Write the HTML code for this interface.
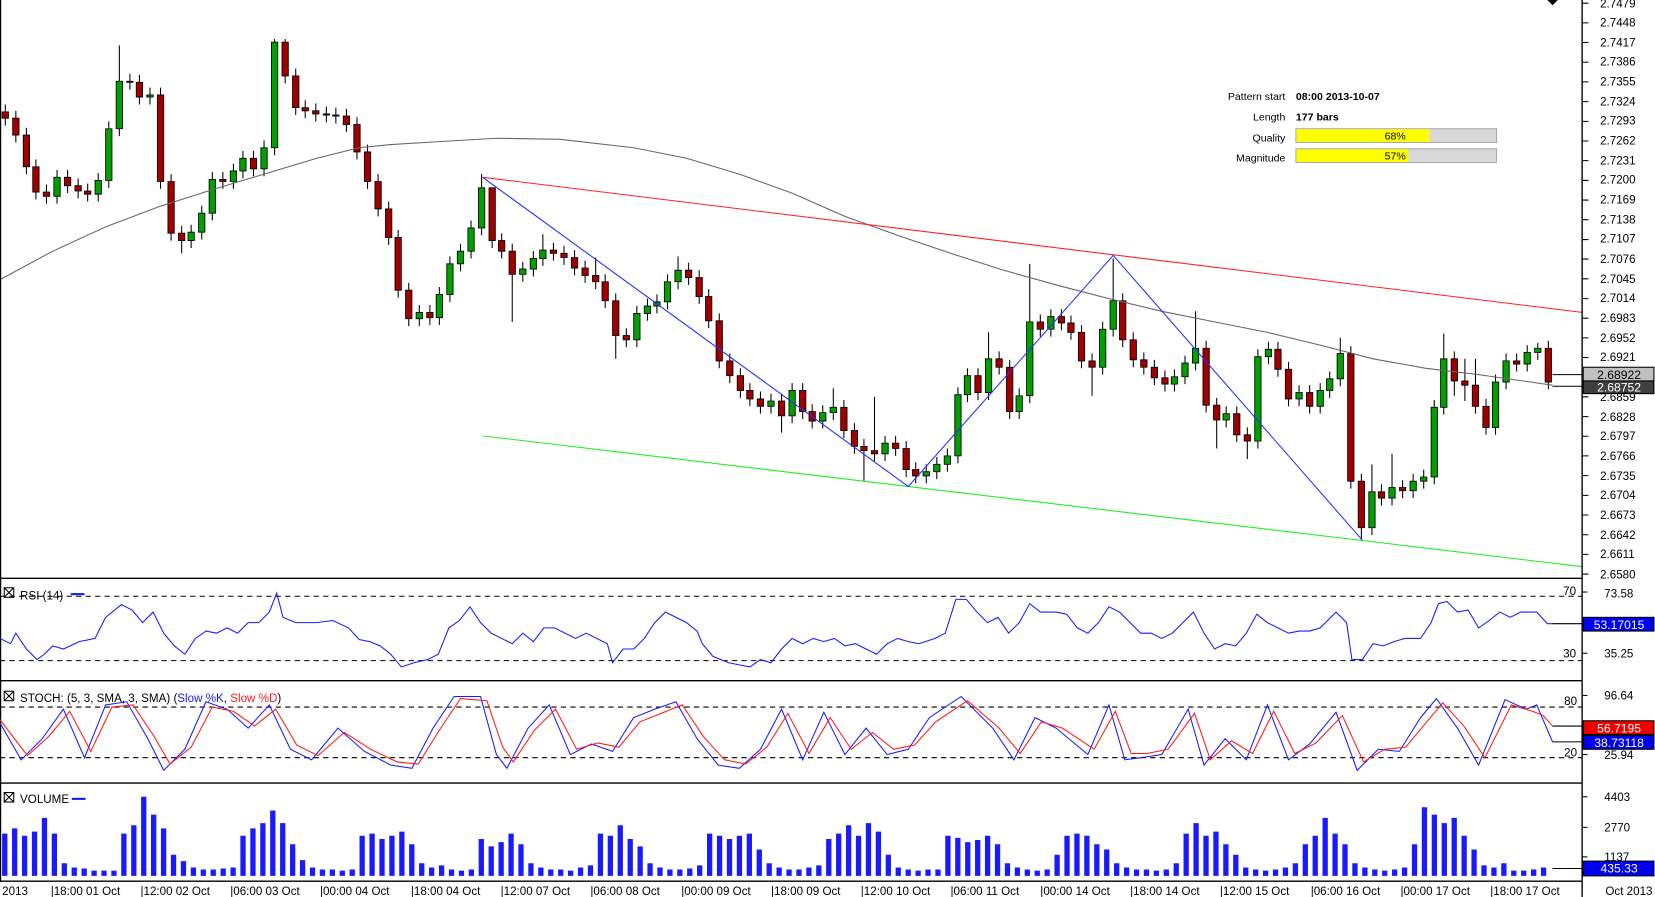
<!DOCTYPE html>
<html><head><meta charset="utf-8"><style>
html,body{margin:0;padding:0;background:#fff;width:1655px;height:897px;overflow:hidden}
svg{display:block;font-family:"Liberation Sans",Arial,sans-serif}
</style></head><body>
<svg width="1655" height="897" viewBox="0 0 1567 850" preserveAspectRatio="none" xmlns="http://www.w3.org/2000/svg">
<rect width="1567" height="850" fill="#fff"/>
<!-- wicks -->
<path fill="none" stroke="#000" stroke-width="1" d="M5,99V119M15,105V135M25,121V165M34,151V189M44,175V193M54,161V193M64,161V183M74,169V188M83,174V191M93,164V191M103,115V178M113,43V129M123,70V85M132,71V99M142,83V99M152,83V179M162,165V228M172,214V240M181,213V235M191,195V227M201,163V209M211,163V179M221,155V179M230,143V169M240,143V167M250,133V167M260,37V147M270,37V79M280,65V109M289,95V112M299,98V115M309,101V116M318,102V117M328,103V125M338,111V151M348,137V179M358,165V205M368,191V232M377,218V282M387,268V309M397,289V309M407,289V308M416,272V308M426,243V286M436,231V257M446,209V245M456,165V223M466,178V235M475,221V245M485,231V305M495,248V267M505,238V262M514,222V252M524,230V247M534,233V251M544,237V261M554,247V268M564,244V274M573,260V292M583,278V340M593,311V329M603,290V329M613,283V304M622,279V297M632,260V293M642,243V274M652,249V270M662,256V288M671,274V311M681,297V349M691,335V363M701,349V377M710,363V385M720,371V392M730,373V392M740,373V410M750,363V401M760,363V397M769,383V406M779,384V406M789,368V398M799,379V415M809,401V430M818,416V456M828,376V437M838,413V437M848,413V432M858,418V452M867,438V458M877,440V458M887,433V454M897,425V447M907,367V439M916,349V381M926,349V379M936,315V379M946,333V355M956,341V397M965,368V397M975,250V382M985,298V319M995,293V319M1005,293V313M1014,299V322M1024,308V349M1034,335V375M1044,305V355M1054,245V319M1063,278V329M1073,315V348M1083,334V355M1093,341V365M1103,351V371M1112,350V371M1122,337V364M1132,295V351M1142,323V391M1152,377V425M1161,385V405M1171,385V419M1181,405V435M1191,331V425M1201,324V345M1210,324V357M1220,343V385M1230,365V385M1240,365V392M1250,363V392M1259,352V377M1269,320V366M1279,328V463M1289,449V512M1299,440V507M1308,459V479M1318,430V479M1328,455V472M1338,449V472M1348,445V463M1358,379V459M1367,316V393M1377,333V375M1387,340V380M1397,340V392M1407,378V412M1416,355V412M1426,335V369M1436,335V352M1446,327V352M1456,325V341M1466,323V369"/>
<!-- green bodies -->
<path fill="#00a000" stroke="#000" stroke-width="0.8" d="M51,168h6V186h-6zM90,171h6V184h-6zM100,122h6V171h-6zM110,77h6V122h-6zM139,90h6V92h-6zM178,220h6V228h-6zM188,202h6V220h-6zM198,170h6V202h-6zM218,162h6V172h-6zM227,150h6V162h-6zM247,140h6V160h-6zM257,40h6V140h-6zM394,296h6V302h-6zM413,279h6V301h-6zM423,250h6V279h-6zM433,238h6V250h-6zM443,216h6V238h-6zM453,178h6V216h-6zM492,255h6V260h-6zM502,245h6V255h-6zM511,237h6V245h-6zM600,297h6V322h-6zM610,290h6V297h-6zM619,286h6V290h-6zM629,267h6V286h-6zM639,256h6V267h-6zM727,380h6V385h-6zM747,370h6V394h-6zM776,391h6V399h-6zM786,386h6V391h-6zM835,420h6V430h-6zM874,447h6V451h-6zM884,440h6V447h-6zM894,432h6V440h-6zM904,374h6V432h-6zM913,356h6V374h-6zM933,340h6V372h-6zM962,375h6V390h-6zM972,305h6V375h-6zM992,300h6V312h-6zM1041,312h6V348h-6zM1051,285h6V312h-6zM1109,357h6V364h-6zM1119,344h6V357h-6zM1129,330h6V344h-6zM1158,392h6V398h-6zM1188,338h6V418h-6zM1198,331h6V338h-6zM1227,372h6V378h-6zM1247,370h6V385h-6zM1256,359h6V370h-6zM1266,335h6V359h-6zM1296,466h6V500h-6zM1315,462h6V472h-6zM1335,456h6V465h-6zM1345,452h6V456h-6zM1355,386h6V452h-6zM1364,340h6V386h-6zM1413,362h6V405h-6zM1423,342h6V362h-6zM1443,334h6V345h-6zM1453,330h6V334h-6z"/>
<!-- red bodies -->
<path fill="#a00000" stroke="#000" stroke-width="0.8" d="M2,106h6V112h-6zM12,112h6V128h-6zM22,128h6V158h-6zM31,158h6V182h-6zM41,182h6V186h-6zM61,168h6V176h-6zM71,176h6V181h-6zM80,181h6V184h-6zM120,77h6V78h-6zM129,78h6V92h-6zM149,90h6V172h-6zM159,172h6V221h-6zM169,221h6V228h-6zM208,170h6V172h-6zM237,150h6V160h-6zM267,40h6V72h-6zM277,72h6V102h-6zM286,102h6V105h-6zM296,105h6V108h-6zM306,108h6V109h-6zM315,109h6V110h-6zM325,110h6V118h-6zM335,118h6V144h-6zM345,144h6V172h-6zM355,172h6V198h-6zM365,198h6V225h-6zM374,225h6V275h-6zM384,275h6V302h-6zM404,296h6V301h-6zM463,178h6V228h-6zM472,228h6V238h-6zM482,238h6V260h-6zM521,237h6V240h-6zM531,240h6V244h-6zM541,244h6V254h-6zM551,254h6V261h-6zM561,261h6V267h-6zM570,267h6V285h-6zM580,285h6V318h-6zM590,318h6V322h-6zM649,256h6V263h-6zM659,263h6V281h-6zM668,281h6V304h-6zM678,304h6V342h-6zM688,342h6V356h-6zM698,356h6V370h-6zM707,370h6V378h-6zM717,378h6V385h-6zM737,380h6V394h-6zM757,370h6V390h-6zM766,390h6V399h-6zM796,386h6V408h-6zM806,408h6V423h-6zM815,423h6V427h-6zM825,427h6V430h-6zM845,420h6V425h-6zM855,425h6V445h-6zM864,445h6V451h-6zM923,356h6V372h-6zM943,340h6V348h-6zM953,348h6V390h-6zM982,305h6V312h-6zM1002,300h6V306h-6zM1011,306h6V315h-6zM1021,315h6V342h-6zM1031,342h6V348h-6zM1060,285h6V322h-6zM1070,322h6V341h-6zM1080,341h6V348h-6zM1090,348h6V358h-6zM1100,358h6V364h-6zM1139,330h6V384h-6zM1149,384h6V398h-6zM1168,392h6V412h-6zM1178,412h6V418h-6zM1207,331h6V350h-6zM1217,350h6V378h-6zM1237,372h6V385h-6zM1276,335h6V456h-6zM1286,456h6V500h-6zM1305,466h6V472h-6zM1325,462h6V465h-6zM1374,340h6V361h-6zM1384,361h6V365h-6zM1394,365h6V385h-6zM1404,385h6V405h-6zM1433,342h6V345h-6zM1463,330h6V362h-6z"/>
<polyline fill="none" stroke="#666" stroke-width="1" points="0,265 50,238 100,215 150,196 200,180 250,165 300,150 340,140 370,137 420,134 470,131 530,132 600,140 650,150 700,165 750,183 800,205 850,223 900,240 950,256 1000,270 1050,283 1100,295 1150,305 1200,315 1250,327 1300,340 1350,349 1400,355 1470,365"/>
<line x1="457" y1="168" x2="1498" y2="296" stroke="#ff2020" stroke-width="1"/>
<line x1="457" y1="413" x2="1498" y2="537" stroke="#22ee22" stroke-width="1"/>
<polyline fill="none" stroke="#2030ff" stroke-width="1" points="457,168 860,461 1054,242 1290,512"/>
<g stroke="#000" stroke-width="1.3" fill="none">
<line x1="0.5" y1="0" x2="0.5" y2="835"/>
<line x1="1498" y1="0" x2="1498" y2="850"/>
<line x1="0" y1="548" x2="1498" y2="548"/>
<line x1="0" y1="645" x2="1498" y2="645"/>
<line x1="0" y1="742" x2="1498" y2="742"/>
<line x1="0" y1="835" x2="1498" y2="835"/>
</g>
<path d="M1465,0 L1475,0 L1470,5 Z" fill="#000"/>
<path stroke="#000" d="M1498,3h6M1498,21.7h6M1498,40.3h6M1498,59h6M1498,77.6h6M1498,96.3h6M1498,115h6M1498,133.6h6M1498,152.2h6M1498,171h6M1498,189.6h6M1498,208.2h6M1498,227h6M1498,245.5h6M1498,264.2h6M1498,283h6M1498,301.5h6M1498,320.2h6M1498,338.8h6M1498,357.5h6M1498,376h6M1498,394.8h6M1498,413.4h6M1498,432h6M1498,450.7h6M1498,469.4h6M1498,488h6M1498,506.7h6M1498,525.3h6M1498,544h6"/>
<g font-size="10">
<text x="1217" y="95" text-anchor="end">Pattern start</text>
<text x="1217" y="114" text-anchor="end">Length</text>
<text x="1217" y="134" text-anchor="end">Quality</text>
<text x="1217" y="153" text-anchor="end">Magnitude</text>
<text x="1227" y="95" font-weight="bold">08:00 2013-10-07</text>
<text x="1227" y="114" font-weight="bold">177 bars</text>
<rect x="1227" y="122" width="190" height="13" fill="#d8d8d8" stroke="#aaa"/>
<rect x="1227.5" y="122.5" width="126" height="12" fill="#ffff00"/>
<text x="1321" y="132" text-anchor="middle">68%</text>
<rect x="1227" y="141" width="190" height="13" fill="#d8d8d8" stroke="#aaa"/>
<rect x="1227.5" y="141.5" width="106" height="12" fill="#ffff00"/>
<text x="1321" y="151" text-anchor="middle">57%</text>
</g>
<line x1="1470" y1="355" x2="1498" y2="355" stroke="#000"/>
<line x1="1470" y1="366" x2="1498" y2="366" stroke="#000"/>
<rect x="1499" y="348" width="67" height="13" fill="#c0c0c0" stroke="#000"/>
<text x="1533" y="359" font-size="11.5" text-anchor="middle">2.68922</text>
<rect x="1499" y="361" width="67" height="12" fill="#404040" stroke="#000"/>
<text x="1533" y="371" font-size="11.5" text-anchor="middle" fill="#fff">2.68752</text>
<g stroke="#000" stroke-dasharray="5,4" stroke-width="1">
<line x1="0" y1="565" x2="1498" y2="565"/><line x1="0" y1="626" x2="1498" y2="626"/>
<line x1="0" y1="670" x2="1498" y2="670"/><line x1="0" y1="718" x2="1498" y2="718"/>
</g>
<polyline fill="none" stroke="#1a1aff" stroke-width="1" points="0,605 10,610 15,600 25,615 35,625 42,620 50,612 60,615 75,608 90,605 100,585 115,573 125,578 135,590 145,580 155,600 165,612 175,620 185,605 195,598 205,600 215,595 225,600 235,590 245,590 255,580 262,562 268,585 280,590 300,590 315,588 330,595 340,606 350,608 360,612 370,620 380,632 392,628 405,625 415,620 425,595 435,588 445,575 455,590 465,600 475,605 485,610 495,600 505,608 515,595 525,595 535,600 545,605 555,600 565,605 575,610 580,628 590,615 600,615 610,605 620,590 630,580 640,585 650,590 660,598 665,610 675,622 690,628 700,630 710,632 720,625 730,628 740,615 750,605 760,610 770,605 780,608 790,605 800,612 810,610 820,615 830,620 840,610 850,605 860,608 870,610 885,605 895,600 905,568 915,568 925,580 935,590 945,585 955,600 965,590 975,572 985,580 1000,580 1010,582 1020,595 1030,600 1040,590 1050,575 1060,580 1070,590 1080,600 1090,600 1100,605 1110,600 1120,590 1130,580 1140,600 1150,615 1160,610 1170,612 1180,600 1190,582 1200,590 1210,595 1220,600 1230,598 1240,598 1250,595 1265,580 1275,590 1280,625 1290,625 1300,610 1310,612 1320,608 1330,605 1345,605 1355,590 1362,572 1370,570 1380,580 1390,578 1400,595 1410,588 1420,580 1430,585 1440,580 1455,580 1465,591 1470,591"/>
<polyline fill="none" stroke="#1a1aff" stroke-width="1" points="0,685 20,720 40,700 60,672 80,718 100,668 120,665 140,700 155,730 175,710 195,665 215,672 235,690 255,668 275,710 295,720 320,690 345,712 370,725 390,728 410,690 430,660 455,660 470,715 480,728 500,690 520,668 540,715 560,705 580,712 600,680 620,672 640,665 660,700 680,725 700,728 720,710 740,672 760,720 780,675 800,715 820,690 840,715 860,710 880,680 910,660 940,690 960,720 980,680 1000,690 1030,715 1050,668 1065,720 1080,718 1100,715 1125,672 1140,725 1160,700 1180,720 1200,668 1220,720 1240,705 1265,675 1285,730 1305,710 1325,712 1345,680 1360,662 1380,690 1400,725 1425,663 1445,672 1455,668 1470,703"/>
<polyline fill="none" stroke="#ff1a1a" stroke-width="1" points="0,682 26,716 46,698 66,674 86,712 106,670 126,668 146,698 161,724 181,708 201,670 221,674 241,688 261,672 281,706 301,716 326,694 351,710 376,722 396,724 416,692 436,662 461,664 476,708 486,722 506,692 526,672 546,710 566,704 586,708 606,684 626,676 646,668 666,698 686,720 706,724 726,708 746,676 766,714 786,680 806,710 826,694 846,710 866,706 886,684 916,664 946,690 966,714 986,684 1006,690 1036,710 1056,674 1071,714 1086,714 1106,710 1131,676 1146,720 1166,702 1186,714 1206,674 1226,714 1246,704 1271,678 1291,722 1311,710 1331,708 1351,684 1366,666 1386,688 1406,718 1431,668 1451,674 1461,678 1470,688"/>
<path fill="#1a1aff" d="M2,830v-40h5v40h4.4v-45h5v45h4.4v-38h5v38h4.4v-42h5v42h4.4v-55h5v55h4.4v-40h5v40h4.4v-12h5v12h4.4v-8h5v8h4.4v-7h5v7h4.4v-5h5v5h4.4v-5h5v5h4.4v-5h5v5h4.4v-40h5v40h4.4v-48h5v48h4.4v-75h5v75h4.4v-58h5v58h4.4v-45h5v45h4.4v-20h5v20h4.4v-14h5v14h4.4v-8h5v8h4.4v-6h5v6h4.4v-6h5v6h4.4v-7h5v7h4.4v-8h5v8h4.4v-38h5v38h4.4v-45h5v45h4.4v-50h5v50h4.4v-62h5v62h4.4v-50h5v50h4.4v-30h5v30h4.4v-15h5v15h4.4v-8h5v8h4.4v-6h5v6h4.4v-6h5v6h4.4v-5h5v5h4.4v-6h5v6h4.4v-38h5v38h4.4v-40h5v40h4.4v-35h5v35h4.4v-38h5v38h4.4v-42h5v42h4.4v-30h5v30h4.4v-12h5v12h4.4v-8h5v8h4.4v-10h5v10h4.4v-6h5v6h4.4v-5h5v5h4.4v-6h5v6h4.4v-35h5v35h4.4v-28h5v28h4.4v-32h5v32h4.4v-40h5v40h4.4v-30h5v30h4.4v-12h5v12h4.4v-8h5v8h4.4v-6h5v6h4.4v-6h5v6h4.4v-5h5v5h4.4v-8h5v8h4.4v-10h5v10h4.4v-40h5v40h4.4v-38h5v38h4.4v-48h5v48h4.4v-35h5v35h4.4v-28h5v28h4.4v-12h5v12h4.4v-8h5v8h4.4v-6h5v6h4.4v-6h5v6h4.4v-7h5v7h4.4v-10h5v10h4.4v-40h5v40h4.4v-38h5v38h4.4v-35h5v35h4.4v-38h5v38h4.4v-40h5v40h4.4v-25h5v25h4.4v-12h5v12h4.4v-8h5v8h4.4v-6h5v6h4.4v-6h5v6h4.4v-8h5v8h4.4v-10h5v10h4.4v-35h5v35h4.4v-40h5v40h4.4v-48h5v48h4.4v-38h5v38h4.4v-50h5v50h4.4v-42h5v42h4.4v-20h5v20h4.4v-8h5v8h4.4v-6h5v6h4.4v-5h5v5h4.4v-6h5v6h4.4v-6h5v6h4.4v-38h5v38h4.4v-36h5v36h4.4v-32h5v32h4.4v-34h5v34h4.4v-38h5v38h4.4v-30h5v30h4.4v-12h5v12h4.4v-8h5v8h4.4v-6h5v6h4.4v-5h5v5h4.4v-6h5v6h4.4v-20h5v20h4.4v-38h5v38h4.4v-40h5v40h4.4v-38h5v38h4.4v-30h5v30h4.4v-25h5v25h4.4v-12h5v12h4.4v-8h5v8h4.4v-6h5v6h4.4v-6h5v6h4.4v-5h5v5h4.4v-6h5v6h4.4v-12h5v12h4.4v-40h5v40h4.4v-50h5v50h4.4v-38h5v38h4.4v-42h5v42h4.4v-30h5v30h4.4v-20h5v20h4.4v-8h5v8h4.4v-6h5v6h4.4v-5h5v5h4.4v-6h5v6h4.4v-8h5v8h4.4v-12h5v12h4.4v-30h5v30h4.4v-38h5v38h4.4v-55h5v55h4.4v-40h5v40h4.4v-30h5v30h4.4v-12h5v12h4.4v-8h5v8h4.4v-6h5v6h4.4v-5h5v5h4.4v-6h5v6h4.4v-8h5v8h4.4v-30h5v30h4.4v-65h5v65h4.4v-58h5v58h4.4v-50h5v50h4.4v-55h5v55h4.4v-38h5v38h4.4v-25h5v25h4.4v-10h5v10h4.4v-8h5v8h4.4v-12h5v12h4.4v-5h5v5h4.4v-5h5v5h4.4v-6h5v6h4.4v-8h5v8z"/>
<g font-size="11">
<rect x="4" y="557" width="9" height="9" fill="none" stroke="#000"/><path d="M4,557 L13,566 M13,557 L4,566" stroke="#000"/>
<text x="19" y="568">RSI (14)</text><line x1="67" y1="563" x2="80" y2="563" stroke="#1a1aff" stroke-width="2"/>
<rect x="4" y="655" width="9" height="9" fill="none" stroke="#000"/><path d="M4,655 L13,664 M13,655 L4,664" stroke="#000"/>
<text x="19" y="665">STOCH: (5, 3, SMA, 3, SMA) (<tspan fill="#1a1aff">Slow %K</tspan>, <tspan fill="#ff1a1a">Slow %D</tspan>)</text>
<rect x="4" y="751" width="9" height="9" fill="none" stroke="#000"/><path d="M4,751 L13,760 M13,751 L4,760" stroke="#000"/>
<text x="19" y="761">VOLUME</text><line x1="68" y1="757" x2="81" y2="757" stroke="#1a1aff" stroke-width="2"/>
<text x="1480" y="564">70</text><text x="1480" y="623">30</text>
<text x="1481" y="668">80</text><text x="1481" y="717">20</text>
<text x="1519" y="566">73.58</text><text x="1519" y="623">35.25</text>
<text x="1519" y="663">96.64</text><text x="1519" y="719">25.94</text>
<text x="1519" y="759">4403</text><text x="1519" y="788">2770</text><text x="1519" y="816">1137</text>
</g>
<g stroke="#000"><line x1="1498" y1="561" x2="1503" y2="561"/><line x1="1498" y1="619" x2="1503" y2="619"/>
<line x1="1498" y1="659" x2="1503" y2="659"/><line x1="1498" y1="715" x2="1503" y2="715"/>
<line x1="1498" y1="755" x2="1503" y2="755"/><line x1="1498" y1="784" x2="1503" y2="784"/><line x1="1498" y1="812" x2="1503" y2="812"/>
<line x1="1470" y1="591" x2="1498" y2="591"/><line x1="1470" y1="688" x2="1498" y2="688"/><line x1="1470" y1="703" x2="1498" y2="703"/><line x1="1470" y1="823" x2="1498" y2="823"/></g>
<rect x="1499" y="585" width="67" height="13" fill="#0000ee" stroke="#000"/><text x="1533" y="596" font-size="11.5" fill="#fff" text-anchor="middle">53.17015</text>
<rect x="1499" y="683" width="67" height="13" fill="#ee0000" stroke="#000"/><text x="1533" y="694" font-size="11.5" fill="#fff" text-anchor="middle">56.7195</text>
<rect x="1499" y="697" width="67" height="13" fill="#0000ee" stroke="#000"/><text x="1533" y="708" font-size="11.5" fill="#fff" text-anchor="middle">38.73118</text>
<rect x="1499" y="816" width="67" height="14" fill="#0000ee" stroke="#000"/><text x="1533" y="827" font-size="11.5" fill="#fff" text-anchor="middle">435.33</text>
<g font-size="11">
<text x="2" y="848">2013</text>
<text x="48" y="848">|18:00 01 Oct</text><text x="133" y="848">|12:00 02 Oct</text><text x="218" y="848">|06:00 03 Oct</text>
<text x="303" y="848">|00:00 04 Oct</text><text x="389" y="848">|18:00 04 Oct</text><text x="474" y="848">|12:00 07 Oct</text>
<text x="559" y="848">|06:00 08 Oct</text><text x="645" y="848">|00:00 09 Oct</text><text x="730" y="848">|18:00 09 Oct</text>
<text x="815" y="848">|12:00 10 Oct</text><text x="900" y="848">|06:00 11 Oct</text><text x="985" y="848">|00:00 14 Oct</text>
<text x="1070" y="848">|18:00 14 Oct</text><text x="1155" y="848">|12:00 15 Oct</text><text x="1241" y="848">|06:00 16 Oct</text>
<text x="1326" y="848">|00:00 17 Oct</text><text x="1411" y="848">|18:00 17 Oct</text><text x="1520" y="848">Oct 2013</text>
</g>
<g font-size="11">
<text x="1515" y="7">2.7479</text><text x="1515" y="25">2.7448</text><text x="1515" y="44">2.7417</text><text x="1515" y="62">2.7386</text>
<text x="1515" y="81">2.7355</text><text x="1515" y="100">2.7324</text><text x="1515" y="118">2.7293</text><text x="1515" y="137">2.7262</text>
<text x="1515" y="156">2.7231</text><text x="1515" y="174">2.7200</text><text x="1515" y="193">2.7169</text><text x="1515" y="212">2.7138</text>
<text x="1515" y="230">2.7107</text><text x="1515" y="249">2.7076</text><text x="1515" y="268">2.7045</text><text x="1515" y="286">2.7014</text>
<text x="1515" y="305">2.6983</text><text x="1515" y="324">2.6952</text><text x="1515" y="342">2.6921</text>
<text x="1515" y="380">2.6859</text><text x="1515" y="399">2.6828</text><text x="1515" y="417">2.6797</text><text x="1515" y="436">2.6766</text>
<text x="1515" y="455">2.6735</text><text x="1515" y="473">2.6704</text><text x="1515" y="492">2.6673</text><text x="1515" y="511">2.6642</text>
<text x="1515" y="529">2.6611</text><text x="1515" y="548">2.6580</text>
</g>
</svg>
</body></html>
